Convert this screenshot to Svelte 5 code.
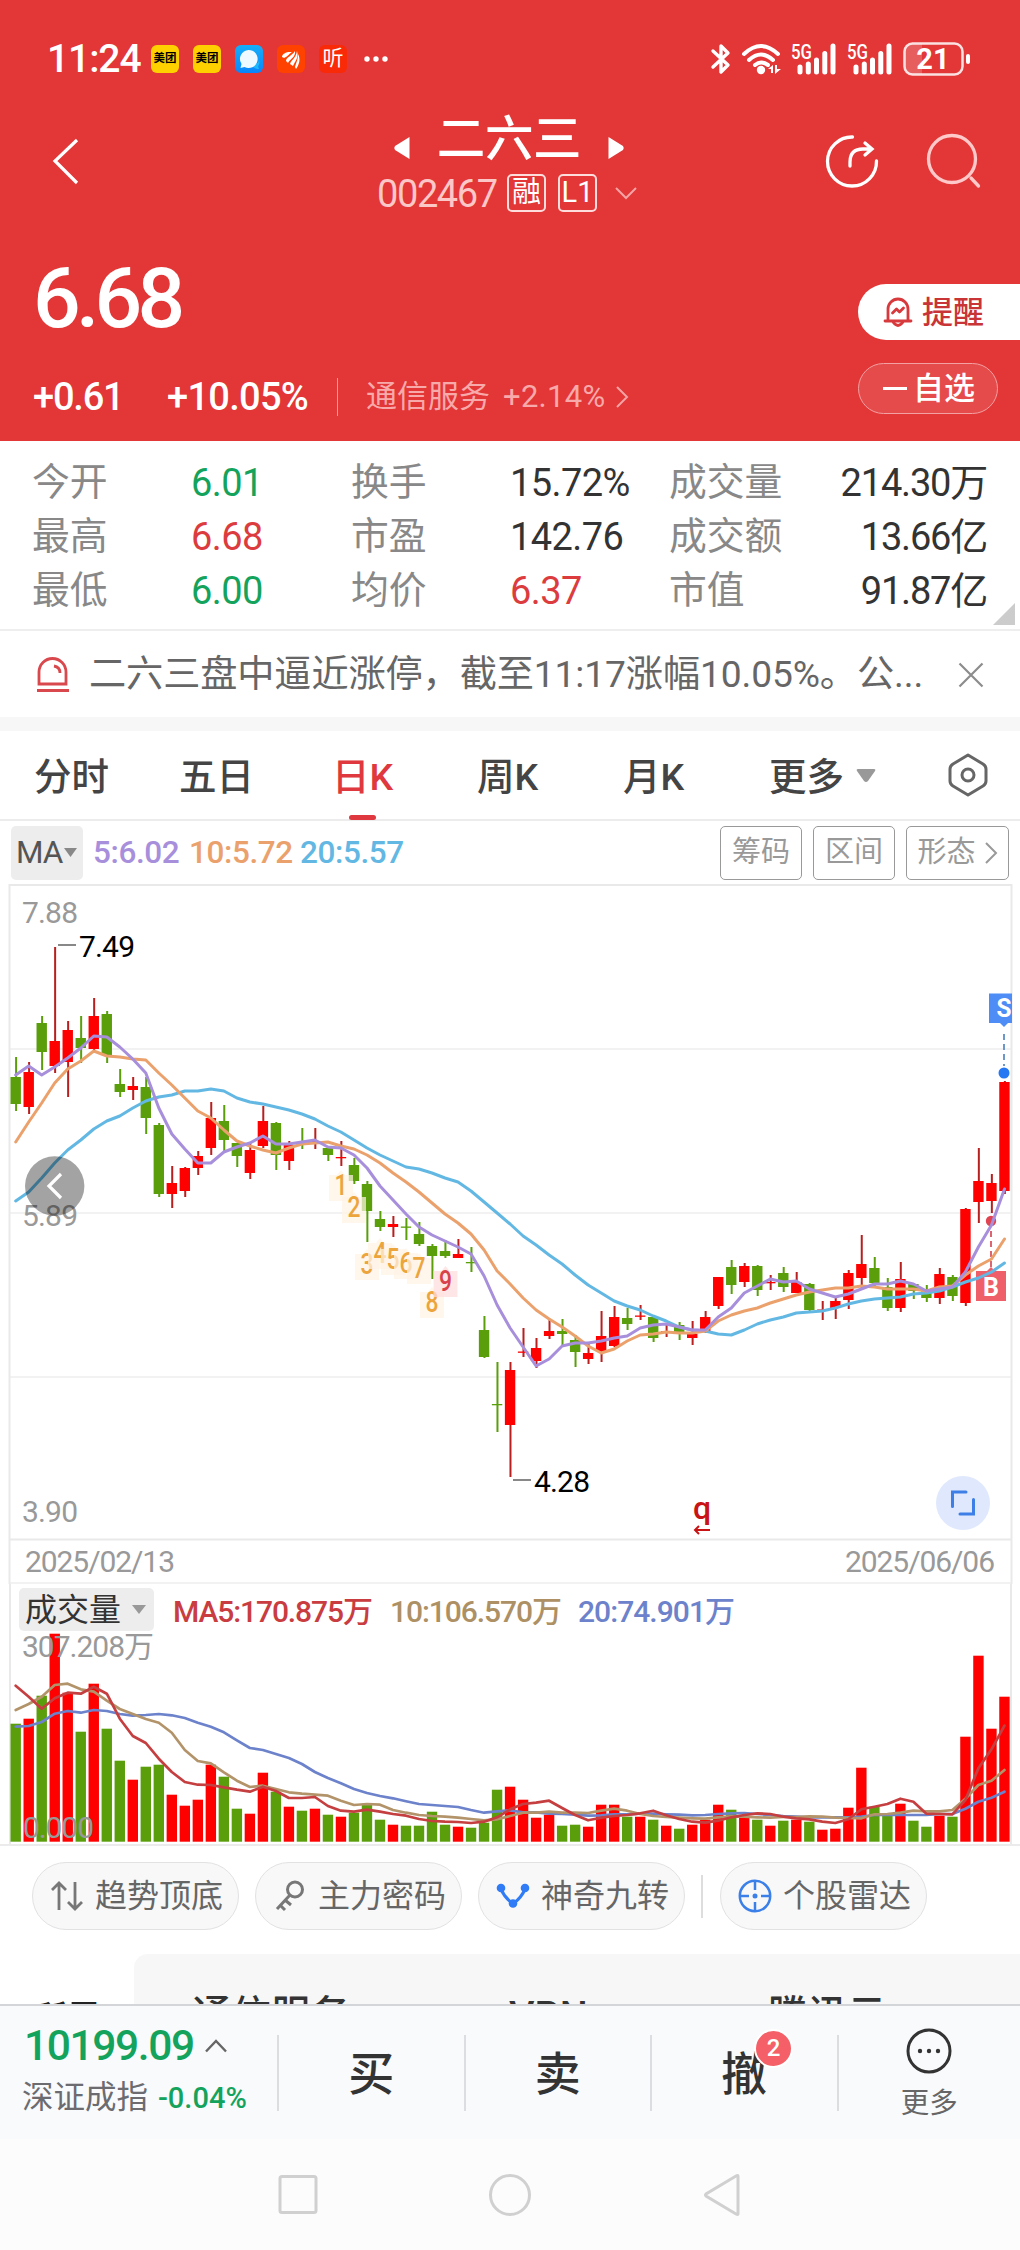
<script>
	const apps = ["meituan", "meituan", "chat", "wing", "listen"];

	const quotes = [
		["今开", "6.01", "down", "换手", "15.72%", "", "成交量", "214.30万"],
		["最高", "6.68", "up", "市盈", "142.76", "", "成交额", "13.66亿"],
		["最低", "6.00", "down", "均价", "6.37", "up", "市值", "91.87亿"]
	];

	// colour, high, body top, body bottom, low
	const candles = [
		["g",1057,1077,1104,1111],["r",1062,1072,1107,1114],["g",1016,1023,1052,1070],["r",947,1041,1066,1073],
		["r",1021,1030,1062,1097],["g",1016,1038,1048,1063],["r",998,1016,1049,1050],["g",1011,1014,1055,1063],
		["g",1069,1084,1092,1097],["r",1077,1086,1090,1100],["g",1077,1087,1118,1134],["g",1123,1125,1194,1197],
		["r",1166,1183,1194,1208],["r",1167,1168,1191,1197],["r",1151,1156,1168,1175],["r",1102,1118,1148,1155],
		["g",1105,1121,1140,1151],["g",1143,1143,1156,1167],["r",1143,1150,1173,1179],["r",1106,1121,1146,1148],
		["g",1122,1123,1155,1170],["r",1141,1145,1161,1170],["g",1128,1143,1144,1149],["r",1128,1141,1142,1149],
		["g",1147,1148,1155,1161],["r",1141,1157,1158,1166],["g",1158,1165,1181,1184],["g",1181,1184,1211,1242],
		["g",1211,1219,1227,1231],["r",1216,1224,1227,1237],["g",1218,1226.5,1227.5,1240],["g",1222,1234,1244,1246],
		["g",1244,1246,1256,1279],["g",1240,1251,1256,1258],["r",1239,1254,1258,1258],["g",1247,1262,1263,1272],
		["g",1316,1330,1357,1358],["g",1362,1404,1405,1432],["r",1362,1370,1425,1477],["r",1328,1351.5,1352.5,1357],
		["r",1338,1348,1361,1368],["r",1320,1331,1336,1339],["g",1319,1331,1334,1345],["g",1335,1340,1352,1367],
		["r",1342,1353,1359,1364],["r",1311,1336,1351,1362],["r",1306,1317,1346,1347],["g",1308,1318,1324,1330],
		["r",1305,1315.5,1316.5,1320],["g",1317,1317,1338,1342],["r",1325,1331,1333,1337],["g",1322,1325,1333,1340],
		["r",1321,1334,1338,1345],["r",1311,1317,1331,1333],["r",1277,1277,1306,1309],["g",1260,1267,1285,1294],
		["r",1263,1266,1282,1287],["g",1265,1266,1290,1296],["r",1275,1282,1283,1290],["g",1267,1273,1287,1292],
		["r",1272,1282,1293,1293],["g",1283,1284,1310,1311],["r",1301,1309.5,1310.5,1320],["r",1298,1301,1308,1319],
		["r",1270,1273,1300,1309],["r",1235,1264,1278,1288],["g",1257,1268,1283,1288],["g",1278,1287,1308,1311],
		["r",1262,1279,1308,1312],["g",1283,1284,1291,1299],["g",1285,1289,1298,1302],["r",1268,1274,1298,1304],
		["g",1275,1277,1296,1301],["r",1208,1209,1303,1306],["r",1148,1181,1202,1223],["r",1174,1183,1201,1213],
		["r",1081,1082,1191,1194]
	];

	const ma5 = [1075,1066,1075,1067,1058,1048,1036,1037,1047,1059,1073,1108,1134,1149,1163,1163,1152,1147,1143,1136,1144,1144,1142,1140,1147,1148,1155,1168,1186,1200,1214,1227,1235,1241,1247,1254,1276,1305,1328,1347,1366,1359,1346,1343,1343,1341,1338,1336,1328,1325,1324,1327,1330,1330,1317,1308,1293,1286,1279,1282,1281,1289,1293,1297,1294,1289,1284,1284,1281,1284,1291,1289,1287,1272,1247,1225,1189];
	const ma10 = [1142,1122,1103,1083,1069,1061,1051,1056,1057,1059,1060,1073,1085,1098,1111,1118,1130,1141,1146,1150,1153,1148,1144,1143,1142,1146,1149,1155,1163,1173,1182,1192,1203,1214,1223,1234,1250,1271,1284,1298,1310,1319,1327,1336,1346,1353,1349,1341,1335,1334,1332,1333,1333,1331,1321,1315,1311,1308,1303,1299,1295,1292,1290,1288,1288,1286,1287,1289,1289,1289,1291,1287,1286,1275,1266,1259,1239];
	const ma20 = [1201,1192,1178,1163,1150,1140,1129,1121,1116,1108,1101,1097,1095,1091,1091,1089,1091,1098,1102,1104,1107,1110,1114,1119,1126,1132,1140,1148,1155,1161,1167,1169,1173,1178,1182,1191,1202,1213,1224,1236,1245,1255,1264,1275,1285,1293,1301,1306,1310,1316,1321,1327,1330,1331,1334,1335,1330,1324,1320,1317,1313,1312,1311,1308,1304,1301,1299,1298,1297,1294,1293,1291,1287,1282,1278,1272,1263];

	const volumes = [118,123,146,208,149,110,158,113,81,62,75,77,47,36,42,77,65,33,28,69,50,35,31,33,27,25,29,38,22,17,16,16,30,17,15,14,19,52,55,42,24,27,16,17,15,37,37,25,25,22,16,13,17,22,37,32,25,22,16,21,22,20,12,13,34,74,35,26,38,21,15,26,25,105,186,113,145];
	const vol5 = [347,380,416,385,368,371,350,371,446,498,519,566,606,636,644,645,652,659,665,650,663,684,684,681,708,722,725,719,725,732,737,747,753,755,756,759,755,742,718,702,698,692,714,735,751,743,738,735,730,722,736,747,755,758,752,742,735,730,732,740,745,748,755,759,748,718,710,702,686,695,731,732,733,690,595,538,467];
	const vol10 = [420,402,380,345,341,358,365,392,417,432,447,458,488,540,573,580,607,632,651,647,657,667,671,674,677,692,705,702,704,720,728,735,738,740,743,747,751,748,738,728,728,725,728,728,729,722,716,722,732,738,741,743,745,746,742,739,740,742,743,741,741,739,740,743,744,745,733,732,728,722,724,724,720,686,645,632,600];
	const vol20 = [470,468,456,431,423,428,420,423,432,437,435,432,436,444,458,470,487,511,534,540,552,564,582,606,624,640,657,669,678,685,694,702,705,708,711,720,728,724,721,727,727,731,732,734,737,736,733,733,731,731,733,734,736,735,732,730,729,732,735,738,740,742,742,742,742,740,735,735,735,735,735,732,732,716,695,683,665];

	const turns = [
		[1, 341, 1195], [2, 354, 1217], [3, 367, 1274], [4, 380, 1263], [5, 393, 1269],
		[6, 406, 1273], [7, 419, 1278], [8, 432, 1312], [9, 445.5, 1291]
	];

	const x = (i) => 15.7 + i * 13.01;
	const line = (ys, k = 1) => ys.map((y, i) => `${x(i).toFixed(1)},${(y / k).toFixed(1)}`).join(" ");
</script>

{#snippet signal()}
	<svg width="46" height="32" viewBox="0 0 46 32">
		<text x="0" y="16" class="net" textLength="21" lengthAdjust="spacingAndGlyphs">5G</text>
		<path d="M9 24v5M17.3 21v8M25.5 17v12M33.8 10.500v18.500M42 3v26" stroke="#fff" stroke-width="5" stroke-linecap="round" />
	</svg>
{/snippet}

<div class="screen">
	<header>
		<div class="status">
			<span class="time">11:24</span>
			<div class="apps">
				{#each apps as app}
					<span class="app {app}">
						{#if app === "meituan"}美团
						{:else if app === "listen"}听
						{:else if app === "chat"}
							<svg width="28" height="28" viewBox="0 0 28 28"><path d="M17 20c5 0 7-3 7-5 1 3 0 5-1 6l1 3c-3 0-6-1-7-4z" fill="#20b8f8" /><path d="M13.500 5a9 9 0 1 1-4 17l-4 1 1-4a9 9 0 0 1 7-14z" fill="#eefaff" /></svg>
						{:else}
							<svg width="28" height="28" viewBox="0 0 28 28"><path d="M5 12c0-3 4-5 8-5h2c-4 3-5 5-8 6zM9 16c0-4 6-5 9-10 1 6-5 8-7 12zM13 19c1-4 6-6 7-13 2 7-2 10-4 15zM18 22c1-4 3-7 3-13 3 5 1 11-2 15z" fill="#fff" /></svg>
						{/if}
					</span>
				{/each}
			</div>
			<svg class="dots" width="26" height="8" viewBox="0 0 26 8" fill="#fff"><circle cx="4" cy="4" r="2.700" /><circle cx="13" cy="4" r="2.700" /><circle cx="22" cy="4" r="2.700" /></svg>
			<div class="signals">
				<svg class="bt" width="20" height="32" viewBox="0 0 20 32"><path d="M2 8l15 14-7 7V3l7 7L2 24" fill="none" stroke="#fff" stroke-width="3.400" stroke-linejoin="round" stroke-linecap="round" /></svg>
				<svg class="wifi" width="42" height="32" viewBox="0 0 42 32">
					<g fill="none" stroke="#fff" stroke-width="4" stroke-linecap="round"><path d="M3 11q17-16 34 0M8 17q12-11 24 0M14 22q6-5 13 0" /></g>
					<circle cx="20" cy="27" r="4.200" fill="#fff" /><path d="M27 26l5-4v8h-2v-4zM34 22v9l6-5h-4v-4z" fill="#fff" />
				</svg>
				{@render signal()}
				{@render signal()}
				<svg width="70" height="34" viewBox="0 0 70 34">
					<path d="M10 2h9v30h-9q-8 0-8-8v-14q0-8 8-8z" fill="#fff" opacity=".2" />
					<rect x="1.500" y="1.500" width="58" height="31" rx="8" fill="none" stroke="#fff" stroke-opacity=".85" stroke-width="2.500" />
					<path d="M65 14v6" stroke="#fff" stroke-width="4" stroke-linecap="round" />
					<text x="30" y="27" class="battery">21</text>
				</svg>
			</div>
		</div>

		<div class="titlebar">
			<svg class="back" width="30" height="50" viewBox="0 0 30 50"><path d="M26 4L4 25l22 22" fill="none" stroke="#fff" stroke-width="3.200" /></svg>
			<div class="name">
				<div class="stock">
					<svg width="16" height="24" viewBox="0 0 16 24"><path d="M15.500 1v22L1 14q-1.500-2 0-4z" fill="#fff" /></svg>
					<h1>二六三</h1>
					<svg width="16" height="24" viewBox="0 0 16 24"><path d="M.5 1v22L15 14q1.500-2 0-4z" fill="#fff" /></svg>
				</div>
				<div class="code">
					<span class="num">002467</span>
					<span class="mark">融</span>
					<span class="mark">L1</span>
					<svg width="24" height="14" viewBox="0 0 24 14"><path d="M2 2l10 10L22 2" fill="none" stroke="#f5a3a4" stroke-width="2" /></svg>
				</div>
			</div>
			<svg class="tools" width="162" height="60" viewBox="0 0 162 60" fill="none" stroke="#fff" stroke-width="3.300" stroke-linecap="round">
				<path d="M27.500 6a24.500 24.500 0 1 0 24 24" />
				<path d="M25 35v-4q0-13 13-13h8M40 12l7 6-7 6" />
				<g stroke="#ffc9c9"><circle cx="127" cy="28" r="23.500" /><path d="M146 47l7.500 8" /></g>
			</svg>
		</div>

		<div class="price-area">
			<div>
				<div class="price">6.68</div>
				<div class="change">
					<span class="diff">+0.61</span>
					<span class="pct">+10.05%</span>
					<i></i>
					<span class="sector">通信服务</span>
					<span class="sector-pct">+2.14%</span>
					<svg width="14" height="24" viewBox="0 0 14 24"><path d="M2 2l10 10L2 22" fill="none" stroke="#f5a3a4" stroke-width="2" /></svg>
				</div>
			</div>
			<div class="actions">
				<button class="remind">
					<svg width="30" height="32" viewBox="0 0 30 32" fill="none" stroke="#d8393d" stroke-width="2.800" stroke-linecap="round" stroke-linejoin="round">
						<path d="M5 24V13a10 10 0 0 1 20 0v11M2 25h26M10 26q5 7 10 0M9.500 17l4-4 3 3 4-4" />
					</svg>
					提醒
				</button>
				<button class="watch"><b></b>自选</button>
			</div>
		</div>
	</header>

	<section class="quotes">
		{#each quotes as q}
			<span class="label">{q[0]}</span>
			<span class="val {q[2]}">{q[1]}</span>
			<span class="label">{q[3]}</span>
			<span class="val {q[5]}">{q[4]}</span>
			<span class="label">{q[6]}</span>
			<span class="val right">{q[7]}</span>
		{/each}
		<svg class="corner" width="22" height="22" viewBox="0 0 22 22"><path d="M22 0v22H0z" fill="#ccc" /></svg>
	</section>

	<section class="notice">
		<svg width="34" height="36" viewBox="0 0 34 36" fill="none" stroke="#d9484c" stroke-width="2.800">
			<path d="M3 27V15a13.500 13.500 0 0 1 27 0v12zM1 33.500h32M18 9q6 1 6 7" />
		</svg>
		<p>二六三盘中逼近涨停，截至11:17涨幅10.05%。公...</p>
		<svg width="26" height="26" viewBox="0 0 26 26"><path d="M1.500 1.500l23 23M24.500 1.500l-23 23" stroke="#8c8c8c" stroke-width="2.200" /></svg>
	</section>

	<nav class="tabs">
		<span class="t1">分时</span>
		<span class="t2">五日</span>
		<span class="t3 active">日K</span>
		<span class="t4">周K</span>
		<span class="t5">月K</span>
		<span class="t6">更多</span>
		<svg class="drop" width="20" height="13" viewBox="0 0 20 13"><path d="M2 0h16q2 0 1 2l-7 10q-2 2-4 0L1 2Q0 0 2 0z" fill="#999" /></svg>
		<svg width="42" height="44" viewBox="0 0 42 44" fill="none" stroke="#666" stroke-width="3" stroke-linejoin="round">
			<path d="M21 2l15 9q3 2 3 5v12q0 3-3 5l-15 9-15-9q-3-2-3-5V16q0-3 3-5z" /><circle cx="21" cy="22" r="6" />
		</svg>
	</nav>

	<section class="ma">
		<span class="ma-pick">MA<svg width="13" height="9" viewBox="0 0 13 9"><path d="M0 0h13L6.500 9z" fill="#888" /></svg></span>
		<span class="m5">5:6.02</span>
		<span class="m10">10:5.72</span>
		<span class="m20">20:5.57</span>
		<div class="ma-btns">
			<button>筹码</button>
			<button>区间</button>
			<button class="wide">形态<svg width="14" height="22" viewBox="0 0 14 22"><path d="M2 1l10 10L2 21" fill="none" stroke="#999" stroke-width="2" /></svg></button>
		</div>
	</section>

	<svg class="kline" width="1020" height="700" viewBox="0 884 1020 700">
		<g stroke="#f2f2f2" stroke-width="2"><path d="M10 1049h1001M10 1213h1001M10 1377h1001M10 1583h1001" /></g>
		<path d="M9.500 1584V885H1011.500V1584M9 1539.500h1003" fill="none" stroke="#e9e9e9" stroke-width="2" />
		{#each candles as c, i}
			<g class={c[0]}>
				<rect class="wick" x={x(i) - 0.6} y={c[1]} width="2" height={c[4] - c[1]} />
				<rect x={x(i) - 5.2} y={c[2]} width="10.400" height={Math.max(c[3] - c[2], 1.3)} />
			</g>
		{/each}
		<g font-size="29" text-anchor="middle">
			{#each turns as [n, cx, y]}
				<path d="M{cx - 12} {y - 20}h8l4-5 4 5h8v26h-24z" fill={n === 9 ? "#ffdcdc" : "#fff2e4"} opacity=".72" />
				<text x={cx} y={y} fill={n === 9 ? "#d8434b" : "#eca43c"} font-weight="500" textLength="13" lengthAdjust="spacingAndGlyphs">{n}</text>
			{/each}
		</g>
		<circle cx="991" cy="1221" r="5.200" fill="#e04450" />
		<path d="M991 1231v37" stroke="#dc6570" stroke-width="2" stroke-dasharray="6 4" />
		<path d="M976 1271h11l4-4 4 4h11v30h-30z" fill="#ef5f69" />
		<text x="991" y="1296" fill="#fff" font-size="25" font-weight="700" text-anchor="middle">B</text>
		<g fill="none" stroke-width="3" stroke-linejoin="round" stroke-linecap="round">
			<polyline points={line(ma20)} stroke="#62b8e3" />
			<polyline points={line(ma10)} stroke="#eba16c" />
			<polyline points={line(ma5)} stroke="#a78fdc" />
		</g>
		<path d="M989 993.500h23v29.500h-4l-4 4-4-4h-11z" fill="#4d8df5" />
		<text x="996.500" y="1017" fill="#fff" font-size="25" font-weight="700" textLength="15" lengthAdjust="spacingAndGlyphs">S</text>
		<path d="M1004 1034v32" stroke="#6c97c8" stroke-width="2" stroke-dasharray="6 4" />
		<circle cx="1004" cy="1073" r="5.500" fill="#2578f2" />

		<g font-size="30" fill="#999">
			<text x="22" y="923" textLength="56">7.88</text>
			<text x="22" y="1226" textLength="56">5.89</text>
			<text x="22" y="1522" textLength="56">3.90</text>
			<text x="25" y="1571.500" textLength="150">2025/02/13</text>
			<text x="845" y="1571.500" textLength="150">2025/06/06</text>
		</g>
		<path d="M58 945h18M513 1480h18" stroke="#888" stroke-width="2" />
		<g font-size="30" fill="#000">
			<text x="79" y="957" textLength="56">7.49</text>
			<text x="534" y="1492" textLength="56">4.28</text>
		</g>
		<text x="693" y="1519" font-size="32" font-weight="500" fill="#c81414">q</text>
		<path d="M710 1530h-15m4-4l-4 4 4 4" fill="none" stroke="#c81414" stroke-width="2" />
		<circle cx="54.700" cy="1186" r="29.700" fill="#000" opacity=".36" />
		<path d="M61 1174l-12 12 12 12" fill="none" stroke="#fff" stroke-width="3.200" />
		<circle cx="963" cy="1503" r="27" fill="#dfe8fd" />
		<path d="M966 1492h-13.500v14.500M960 1514h13.500v-14.500" fill="none" stroke="#3d7fe6" stroke-width="3" stroke-linecap="round" />
	</svg>

	<div class="volume">
		<div class="vol-head">
			<span class="vol-pick">成交量<svg width="14" height="9" viewBox="0 0 14 9"><path d="M0 0h14L7 9z" fill="#999" /></svg></span>
			<svg width="600" height="44" viewBox="160 1588 600 44" font-size="30" font-weight="500">
				<text x="173" y="1622" fill="#c93c3f" textLength="200">MA5:170.875万</text>
				<text x="390" y="1622" fill="#ad9064" textLength="172">10:106.570万</text>
				<text x="578" y="1622" fill="#6c82cb" textLength="157">20:74.901万</text>
			</svg>
		</div>
		<svg width="1020" height="214" viewBox="0 1632 1020 214">
			{#each volumes as h, i}
				<rect class={candles[i][0]} x={x(i) - 5.2} y={1841.700 - h} width="10.400" height={h} />
			{/each}
			<g fill="none" stroke-width="2.700" stroke-linejoin="round" stroke-linecap="round" transform="translate(0 1570)">
				<polyline points={line(vol20, 3)} stroke="#6c82cb" />
				<polyline points={line(vol10, 3)} stroke="#b3946a" />
				<polyline points={line(vol5, 3)} stroke="#c53f40" />
			</g>
			<g fill="#999" font-size="30">
				<text x="22" y="1657" textLength="132">307.208万</text>
				<text x="23" y="1838" textLength="71">0.000</text>
			</g>
		</svg>
	</div>

	<section class="lower">
		<div class="chips">
			<button>
				<svg width="34" height="32" viewBox="0 0 34 32" fill="none" stroke="#777" stroke-width="2.800"><path d="M9 30V3M2 10l7-7 7 7M25 2v27M18 22l7 7 7-7" /></svg>
				趋势顶底
			</button>
			<button>
				<svg width="34" height="32" viewBox="0 0 34 32" fill="none" stroke="#777" stroke-width="3"><circle cx="22" cy="9.500" r="7.500" /><path d="M17 15L4 29M12 20l6 5M7 25l5 5" /></svg>
				主力密码
			</button>
			<button>
				<svg width="34" height="32" viewBox="0 0 34 32" fill="none" stroke="#2f7cf6" stroke-width="3.200"><path d="M5 9q3 8 12 15 9-7 12-15" /><g fill="#2f7cf6" stroke="none"><circle cx="5" cy="8" r="4.300" /><circle cx="29" cy="8" r="4.300" /><circle cx="17" cy="23.500" r="4.300" /></g></svg>
				神奇九转
			</button>
			<i></i>
			<button>
				<svg width="34" height="34" viewBox="0 0 34 34" fill="none" stroke="#3b7fe8" stroke-width="2.500"><circle cx="17" cy="17" r="15.200" /><path d="M17 2v9M17 23v9M2 17h9M23 17h9" /><circle cx="17" cy="17" r="2.500" fill="#3b7fe8" stroke="none" /></svg>
				个股雷达
			</button>
		</div>
		<div class="boards">
			<span class="belong">所属</span>
			<div class="card"><span>通信服务</span><span>VPN</span><span>腾讯云</span></div>
		</div>
	</section>

	<footer>
		<div class="index">
			<div class="point">10199.09<svg width="24" height="14" viewBox="0 0 24 14"><path d="M2 12.500L12 2l10 10.500" fill="none" stroke="#666" stroke-width="2.400" /></svg></div>
			<div class="idx-name">深证成指<span>-0.04%</span></div>
		</div>
		<div class="trade">买</div>
		<div class="trade">卖</div>
		<div class="trade">撤<em>2</em></div>
		<div class="more">
			<svg width="48" height="48" viewBox="0 0 48 48"><circle cx="24" cy="24" r="21" fill="none" stroke="#333" stroke-width="3" /><g fill="#333"><circle cx="15" cy="24" r="2.200" /><circle cx="24" cy="24" r="2.200" /><circle cx="33" cy="24" r="2.200" /></g></svg>
			更多
		</div>
	</footer>

	<div class="sysnav">
		<svg width="40" height="42" viewBox="0 0 40 42"><rect x="2" y="2.500" width="36" height="36" rx="2" /></svg>
		<svg width="44" height="44" viewBox="0 0 44 44"><circle cx="22" cy="22" r="19.500" /></svg>
		<svg width="40" height="44" viewBox="0 0 40 44"><path d="M36 3v38q0 1-2 0L4 23q-1-1 0-2L34 3q2-1 2 0z" /></svg>
	</div>
</div>

<style>
	:global(body) {
		background: #fff;
	}
	.screen {
		width: 1020px;
		height: 2250px;
		overflow: hidden;
		display: flex;
		flex-direction: column;
		background: #fff;
		font-family: Roboto, "Noto Sans CJK SC", sans-serif;
		color: #333;
		line-height: 1;
	}
	.screen * {
		box-sizing: border-box;
	}
	svg {
		display: block;
		flex: none;
		overflow: visible;
	}
	button {
		font: inherit;
		padding: 0;
		display: flex;
		align-items: center;
		border: 0;
	}
	header {
		height: 441px;
		background: #e23637;
		color: #fff;
	}
	.status {
		height: 118px;
		display: flex;
		align-items: center;
		padding-left: 47px;
	}
	.time {
		width: 104px;
		padding-top: 1px;
		font-size: 39px;
		font-weight: 500;
		letter-spacing: -1.1px;
	}
	.apps {
		display: flex;
		gap: 14px;
	}
	.app {
		width: 28px;
		height: 28px;
		border-radius: 6px;
		overflow: hidden;
		text-align: center;
	}
	.meituan {
		background: #ffd000;
		color: #000;
		font-size: 11.500px;
		font-weight: 700;
		line-height: 27px;
	}
	.chat {
		background: linear-gradient(#16aef8, #0986fb);
	}
	.wing {
		background: #ff4200;
	}
	.listen {
		background: #f92a08;
		font-size: 21px;
		line-height: 26px;
	}
	.dots {
		margin-left: 16px;
	}
	.signals {
		display: flex;
		align-items: center;
		margin-left: 322px;
	}
	.bt {
		margin-right: 10px;
	}
	.wifi {
		margin-right: 8px;
	}
	.signals svg:nth-child(3) {
		margin-right: 10px;
	}
	.signals svg:nth-child(4) {
		margin-right: 10px;
	}
	.net {
		font-size: 20px;
		font-weight: 500;
		fill: #fff;
	}
	.battery {
		font-size: 29px;
		font-weight: 700;
		fill: #fff;
		text-anchor: middle;
	}
	.titlebar {
		height: 120px;
		display: flex;
		align-items: flex-start;
		padding-left: 51px;
	}
	.back {
		margin-top: 18px;
	}
	.name {
		width: 646px;
		margin-left: 20px;
		padding-left: 192px;
		display: flex;
		flex-direction: column;
		align-items: center;
	}
	.stock {
		display: flex;
		align-items: center;
		gap: 27px;
		height: 54px;
		margin-right: 22px;
	}
	.stock svg {
		margin-top: 6px;
	}
	h1 {
		margin: -9px 0 0;
		font-size: 48.500px;
		font-weight: 500;
		letter-spacing: -0.300px;
	}
	.code {
		display: flex;
		align-items: center;
		height: 42px;
		margin-right: 25px;
	}
	.num {
		width: 130px;
		padding-top: 1px;
		font-size: 38px;
		letter-spacing: -1.400px;
		color: #fcc7c7;
	}
	.mark {
		width: 39px;
		height: 38px;
		border: 2px solid #ffdcdc;
		border-radius: 5px;
		font-size: 29px;
		line-height: 33px;
		text-align: center;
		margin-right: 12px;
	}
	.code svg {
		margin-left: 5px;
	}
	.tools {
		margin: 13px 0 0 78px;
	}
	.price-area {
		display: flex;
		justify-content: space-between;
		padding-left: 33px;
	}
	.price {
		height: 120px;
		font-size: 84px;
		font-weight: 500;
		line-height: 121px;
		letter-spacing: -4.800px;
	}
	.change {
		display: flex;
		align-items: center;
		height: 77px;
	}
	.diff,
	.pct {
		font-size: 38px;
		font-weight: 500;
	}
	.diff {
		width: 134px;
		letter-spacing: -1.200px;
	}
	.change i {
		width: 1px;
		height: 38px;
		margin: 0 28px 0 29px;
		background: #f29a9b;
	}
	.pct {
		width: 141px;
		letter-spacing: -0.700px;
	}
	.sector,
	.sector-pct {
		color: #f8a9aa;
		font-size: 31px;
	}
	.sector-pct {
		width: 112px;
		margin-left: 13px;
		letter-spacing: 0.300px;
	}
	.actions {
		width: 162px;
		padding-top: 46px;
	}
	.remind {
		width: 162px;
		height: 56px;
		padding-left: 25px;
		gap: 9px;
		border-radius: 28px 0 0 28px;
		background: #fff;
		color: #c93437;
		font-size: 31px;
		font-weight: 500;
	}
	.watch {
		width: 140px;
		height: 51px;
		margin-top: 23px;
		padding-left: 24px;
		gap: 6px;
		border: 1.500px solid #f3a1a2;
		border-radius: 26px;
		background: #e64b4c;
		color: #fff;
		font-size: 31px;
		font-weight: 500;
	}
	.watch b {
		width: 24px;
		height: 3px;
		background: #fff;
	}
	.quotes {
		position: relative;
		height: 190px;
		padding: 15px 33px 0 32px;
		display: grid;
		grid-template-columns: 159px 160px 159px 159px 120px 198px;
		grid-auto-rows: 54px;
		align-items: center;
		border-bottom: 2px solid #eee;
	}
	.label {
		font-size: 37.800px;
		color: #888;
		white-space: nowrap;
	}
	.val {
		font-size: 38px;
		letter-spacing: -0.600px;
		white-space: nowrap;
	}
	.right {
		text-align: right;
		letter-spacing: -1.200px;
	}
	.down {
		color: #14a35c;
	}
	.up {
		color: #dc3c3e;
	}
	.corner {
		position: absolute;
		right: 5px;
		bottom: 4px;
	}
	.notice {
		height: 100px;
		padding: 2px 36px 0;
		display: flex;
		align-items: center;
		border-bottom: 14px solid #f7f7f8;
	}
	.notice p {
		width: 870px;
		margin: 0 0 0 19px;
		font-size: 37.200px;
		color: #666;
		white-space: nowrap;
		letter-spacing: -0.120px;
	}
	.tabs {
		height: 90px;
		display: flex;
		align-items: center;
		padding-left: 34px;
		border-bottom: 2px solid #ececec;
		font-size: 37.500px;
		font-weight: 500;
		color: #444;
	}
	.tabs span {
		position: relative;
		height: 89px;
		line-height: 92px;
	}
	.t1 {
		width: 145px;
	}
	.t2 {
		width: 153px;
	}
	.t3 {
		width: 63px;
		margin-right: 82px;
	}
	.t4 {
		width: 146px;
	}
	.t5 {
		width: 146px;
	}
	.t6 {
		width: 87px;
	}
	.tabs .active {
		color: #e0383f;
	}
	.tabs .active::after {
		content: "";
		position: absolute;
		left: 17px;
		bottom: 0;
		width: 27px;
		height: 5px;
		border-radius: 3px;
		background: #e0383f;
	}
	.drop {
		margin-right: 71px;
	}
	.ma {
		height: 63px;
		padding: 0 11px 0 11px;
		display: flex;
		align-items: center;
		font-size: 31.500px;
	}
	.ma-pick {
		width: 72px;
		height: 54px;
		padding-left: 5px;
		border-radius: 5px;
		background: #ededed;
		display: flex;
		align-items: center;
		gap: 2px;
		color: #555;
		margin-right: 10px;
		letter-spacing: -1px;
	}
	.m5 {
		width: 96px;
		color: #a78fdc;
	}
	.m10 {
		width: 111px;
		color: #eba16c;
	}
	.m20 {
		color: #62b8e3;
	}
	.m5,
	.m10,
	.m20 {
		font-weight: 500;
		letter-spacing: -0.400px;
	}
	.ma-btns {
		margin-left: auto;
		display: flex;
		gap: 11px;
	}
	.ma-btns button {
		width: 82px;
		height: 54px;
		justify-content: center;
		border: 1.500px solid #999;
		border-radius: 5px;
		background: #fff;
		color: #999;
		font-size: 29px;
	}
	.ma-btns .wide {
		width: 103px;
		gap: 8px;
	}
	.r {
		fill: #fe0000;
	}
	.g {
		fill: #5a9e0c;
	}
	.r .wick {
		fill: #b81f1f;
	}
	.volume {
		height: 262px;
		margin: 0;
		border-bottom: 2px solid #ebebeb;
		background: linear-gradient(#e9e9e9, #e9e9e9) 9px 0 / 2px 100% no-repeat, linear-gradient(#e9e9e9, #e9e9e9) 1010px 0 / 2px 100% no-repeat;
	}
	.vol-head {
		display: flex;
		height: 48px;
		padding: 4px 0 0 19px;
	}
	.vol-pick {
		width: 135px;
		height: 43px;
		margin-right: 6px;
		padding-left: 6px;
		border-radius: 5px;
		background: #ededed;
		display: flex;
		align-items: center;
		gap: 11px;
		font-size: 32px;
	}
	.lower {
		height: 158px;
		overflow: hidden;
	}
	.chips {
		display: flex;
		align-items: center;
		padding: 16px 0 0 32px;
	}
	.chips button {
		width: 207px;
		height: 68px;
		padding-left: 17px;
		gap: 11px;
		margin-right: 16px;
		border: 1.500px solid #e2e2e4;
		border-radius: 34px;
		background: #f8f8f8;
		color: #666;
		font-size: 32px;
		white-space: nowrap;
	}
	.chips i {
		width: 2px;
		height: 43px;
		margin-right: 17px;
		background: #ddd;
	}
	.boards {
		margin-top: 24px;
		display: flex;
		padding-left: 34px;
	}
	.belong {
		width: 100px;
		padding-top: 47px;
		font-size: 33px;
		color: #222;
	}
	.card {
		width: 886px;
		height: 120px;
		padding: 42px 0 0 58px;
		border-radius: 14px 0 0;
		background: #f7f7f7;
		display: grid;
		grid-template-columns: 317px 259px 200px;
		font-size: 39.500px;
		font-weight: 500;
	}
	footer {
		height: 135px;
		border-top: 2px solid #d4d5d8;
		background: #f9fafc;
		display: flex;
	}
	.index {
		width: 277px;
		padding: 19px 0 0 22px;
	}
	.point {
		display: flex;
		align-items: center;
		gap: 10px;
		padding-left: 2px;
		color: #14a35c;
		font-size: 42.500px;
		font-weight: 500;
		letter-spacing: -1.400px;
	}
	.idx-name {
		display: flex;
		align-items: center;
		gap: 10px;
		margin-top: 12px;
		font-size: 31.500px;
		line-height: 36px;
		color: #6b6b70;
	}
	.idx-name span {
		color: #14a35c;
		font-size: 29px;
		font-weight: 500;
		letter-spacing: 0;
	}
	.trade {
		position: relative;
		width: 186.500px;
		height: 76px;
		margin-top: 29px;
		border-left: 2px solid #dcdde0;
		text-align: center;
		font-size: 46px;
		font-weight: 500;
		line-height: 79px;
	}
	.trade em {
		position: absolute;
		left: 102px;
		top: -6px;
		width: 39px;
		height: 39px;
		border: 2px solid #fff;
		border-radius: 50%;
		background: #f55f67;
		color: #fff;
		font-size: 24px;
		font-style: normal;
		line-height: 35px;
	}
	.more {
		flex: 1;
		height: 76px;
		margin-top: 29px;
		border-left: 2px solid #dcdde0;
		display: flex;
		flex-direction: column;
		align-items: center;
		font-size: 28.500px;
		color: #666;
	}
	.more svg {
		margin: -8px 0 15px;
	}
	.sysnav {
		height: 111px;
		background: #fcfcfc;
		display: flex;
		align-items: center;
		padding-left: 278px;
		gap: 170px;
		fill: none;
		stroke: #d0d0d0;
		stroke-width: 3;
	}
</style>
